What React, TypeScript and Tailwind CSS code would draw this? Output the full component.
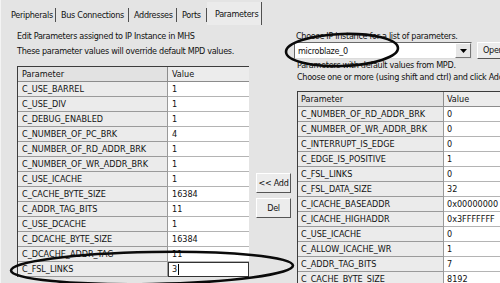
const F = "font-['Liberation_Sans_Narrow','Arial_Narrow','DejaVu_Sans_Condensed','Liberation_Sans',sans-serif]";

const leftRows: [string, string][] = [
  ["C_USE_BARREL", "1"],
  ["C_USE_DIV", "1"],
  ["C_DEBUG_ENABLED", "1"],
  ["C_NUMBER_OF_PC_BRK", "4"],
  ["C_NUMBER_OF_RD_ADDR_BRK", "1"],
  ["C_NUMBER_OF_WR_ADDR_BRK", "1"],
  ["C_USE_ICACHE", "1"],
  ["C_CACHE_BYTE_SIZE", "16384"],
  ["C_ADDR_TAG_BITS", "11"],
  ["C_USE_DCACHE", "1"],
  ["C_DCACHE_BYTE_SIZE", "16384"],
  ["C_DCACHE_ADDR_TAG", "11"],
];

const rightRows: [string, string][] = [
  ["C_NUMBER_OF_RD_ADDR_BRK", "0"],
  ["C_NUMBER_OF_WR_ADDR_BRK", "0"],
  ["C_INTERRUPT_IS_EDGE", "0"],
  ["C_EDGE_IS_POSITIVE", "1"],
  ["C_FSL_LINKS", "0"],
  ["C_FSL_DATA_SIZE", "32"],
  ["C_ICACHE_BASEADDR", "0x00000000"],
  ["C_ICACHE_HIGHADDR", "0x3FFFFFFF"],
  ["C_USE_ICACHE", "0"],
  ["C_ALLOW_ICACHE_WR", "1"],
  ["C_ADDR_TAG_BITS", "7"],
  ["C_CACHE_BYTE_SIZE", "8192"],
];

function Tab({ label, w }: { label: string; w: string }) {
  return (
    <div className={`${w} h-[14px] mt-[8px] border-r border-[#505050] pl-[5px] leading-[14px] whitespace-nowrap overflow-hidden`}>
      {label}
    </div>
  );
}

const cellL = "h-[15px] leading-[14px] pl-[4px] whitespace-nowrap overflow-hidden tracking-normal";
const cellR = "h-[15px] leading-[14px] pl-[3px] whitespace-nowrap overflow-hidden tracking-normal";
const btn = "bg-[#ececec] border border-t-white border-l-white border-r-[#555] border-b-[#555]";

export default function App() {
  return (
    <div className={`relative w-[500px] h-[283px] overflow-hidden bg-[#e4e4e4] text-[9px] tracking-[-0.3px] text-[#111] flex ${F}`}>
      <div className="w-[4px] h-full bg-[#a9a9a9] border-r border-[#f4f4f4]" />
      <div className="flex-1 flex flex-col">
        {/* tabs */}
        <div className="h-[25px] flex items-start pl-[5px]">
          <Tab label="Peripherals" w="w-[50px]" />
          <Tab label="Bus Connections" w="w-[73px]" />
          <Tab label="Addresses" w="w-[48px]" />
          <Tab label="Ports" w="w-[30px]" />
          <div className="w-[55px] h-[23px] mt-[2px] bg-[#ebebeb] border-r border-[#505050] pl-[8px] pt-[5px] leading-[14px] whitespace-nowrap">
            Parameters
          </div>
        </div>
        {/* content */}
        <div className="flex">
          {/* left column */}
          <div className="ml-[16px] w-[232px] flex flex-col pt-[4px]">
            <div className="h-[15px] leading-[15px] whitespace-nowrap">Edit Parameters assigned to IP Instance in MHS</div>
            <div className="h-[15px] leading-[15px] whitespace-nowrap">These parameter values will override default MPD values.</div>
            <div className="mt-[7px] border-t border-l border-[#3c3c3c] grid grid-cols-[150px_81px]">
              <div className={`${cellL} bg-[#e2e2e2] border-b border-r border-[#8c8c8c]`}>Parameter</div>
              <div className={`${cellL} bg-[#ececec] border-b border-[#8c8c8c]`}>Value</div>
              {leftRows.map(([p, v]) => (
                <>
                  <div key={p} className={`${cellL} bg-[#ebebeb] border-b border-r border-[#9a9a9a]`}>{p}</div>
                  <div key={p + "v"} className={`${cellL} bg-white border-b border-[#b4b4b4]`}>{v}</div>
                </>
              ))}
              <div className={`${cellL} bg-[#ebebeb] border-b border-r border-[#9a9a9a]`}>C_FSL_LINKS</div>
              <div className="h-[15px] bg-white border border-[#333] flex items-center pl-[3px]">
                <span className="leading-[13px]">3</span>
                <span className="w-[1px] h-[11px] bg-black ml-[1px]" />
              </div>
            </div>
          </div>
          {/* middle buttons */}
          <div className="w-[45px] flex flex-col items-start pl-[7px] pt-[148px] gap-[5px]">
            <div className={`w-[35px] h-[20px] ${btn} flex items-center justify-center leading-none whitespace-nowrap`}>
              &lt;&lt; Add
            </div>
            <div className={`w-[35px] h-[20px] ${btn} flex items-center justify-center leading-none`}>
              Del
            </div>
          </div>
          {/* right column */}
          <div className="flex-1 flex flex-col pt-[5px]">
            <div className="h-[12px] leading-[12px] pl-[2px] whitespace-nowrap">Choose IP instance for a list of parameters.</div>
            <div className="flex h-[17px]">
              <div className="w-[178px] h-[17px] bg-white border border-t-[#6a6a6a] border-l-[#6a6a6a] border-r-[#dcdcdc] border-b-[#dcdcdc] flex items-center">
                <span className="flex-1 pl-[3px] leading-[14px]">microblaze_0</span>
                <div className="w-[16px] h-[15px] bg-[#e6e6e6] border border-t-white border-l-white border-r-[#777] border-b-[#777] flex items-center justify-center">
                  <svg width="7" height="4" viewBox="0 0 7 4"><polygon points="0,0 7,0 3.5,4" fill="#000" /></svg>
                </div>
              </div>
              <div className={`ml-[5px] w-[30px] h-[17px] ${btn} pl-[5px] leading-[15px] whitespace-nowrap overflow-hidden`}>
                Open...
              </div>
            </div>
            <div className="h-[12px] leading-[12px] pl-[3px] whitespace-nowrap">Parameters with default values from MPD.</div>
            <div className="h-[13px] leading-[13px] pl-[3px] whitespace-nowrap">Choose one or more (using shift and ctrl) and click Add</div>
            <div className="mt-[7px] ml-[3px] border-t border-l border-[#3c3c3c] grid grid-cols-[146px_60px]">
              <div className={`${cellR} bg-[#e2e2e2] border-b border-r border-[#8c8c8c]`}>Parameter</div>
              <div className={`${cellR} bg-[#ececec] border-b border-[#8c8c8c]`}>Value</div>
              {rightRows.map(([p, v]) => (
                <>
                  <div key={p} className={`${cellR} bg-[#ebebeb] border-b border-r border-[#9a9a9a]`}>{p}</div>
                  <div key={p + "v"} className={`${cellR} bg-white border-b border-[#b4b4b4]`}>{v}</div>
                </>
              ))}
            </div>
          </div>
        </div>
      </div>
      {/* hand-drawn ellipses */}
      <svg className="absolute inset-0 pointer-events-none" width="500" height="283" viewBox="0 0 500 283">
        <ellipse cx="342" cy="50" rx="56" ry="16" transform="rotate(-2 342 50)" fill="none" stroke="#0a0a0a" strokeWidth="2.6" />
        <ellipse cx="152" cy="268" rx="141" ry="16" transform="rotate(-1 152 268)" fill="none" stroke="#0a0a0a" strokeWidth="2.6" />
      </svg>
    </div>
  );
}
